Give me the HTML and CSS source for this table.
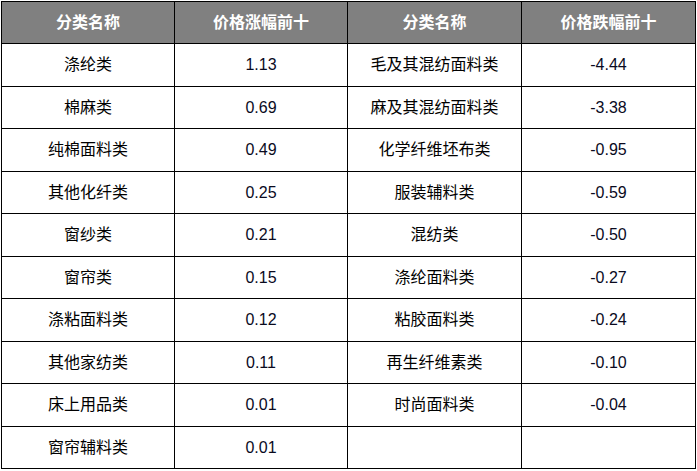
FILE: index.html
```html
<!DOCTYPE html>
<html lang="zh">
<head>
<meta charset="utf-8">
<link rel="stylesheet" href="styles.css">
</head>
<body>
<div class="wrap">
<table class="data">
  <colgroup>
    <col class="c1"><col class="c2"><col class="c3"><col class="c4">
  </colgroup>
  <thead>
    <tr><th>分类名称</th><th>价格涨幅前十</th><th>分类名称</th><th>价格跌幅前十</th></tr>
  </thead>
  <tbody>
    <tr class="r-a"><td>涤纶类</td><td class="num">1.13</td><td>毛及其混纺面料类</td><td class="num">-4.44</td></tr>
    <tr class="r-b"><td>棉麻类</td><td class="num">0.69</td><td>麻及其混纺面料类</td><td class="num">-3.38</td></tr>
    <tr class="r-a"><td>纯棉面料类</td><td class="num">0.49</td><td>化学纤维坯布类</td><td class="num">-0.95</td></tr>
    <tr class="r-b"><td>其他化纤类</td><td class="num">0.25</td><td>服装辅料类</td><td class="num">-0.59</td></tr>
    <tr class="r-a"><td>窗纱类</td><td class="num">0.21</td><td>混纺类</td><td class="num">-0.50</td></tr>
    <tr class="r-b"><td>窗帘类</td><td class="num">0.15</td><td>涤纶面料类</td><td class="num">-0.27</td></tr>
    <tr class="r-a"><td>涤粘面料类</td><td class="num">0.12</td><td>粘胶面料类</td><td class="num">-0.24</td></tr>
    <tr class="r-b"><td>其他家纺类</td><td class="num">0.11</td><td>再生纤维素类</td><td class="num">-0.10</td></tr>
    <tr class="r-a"><td>床上用品类</td><td class="num">0.01</td><td>时尚面料类</td><td class="num">-0.04</td></tr>
    <tr class="r-b"><td>窗帘辅料类</td><td class="num">0.01</td><td></td><td></td></tr>
  </tbody>
</table>
</div>
</body>
</html>
```

FILE: styles.css
```css
html, body {
  margin: 0;
  padding: 0;
  background: #ffffff;
}
.wrap {
  padding: 1px 0 0 1px;
}
.data {
  border-collapse: collapse;
  table-layout: fixed;
  width: 694px;
  font-family: "Liberation Sans", Arial, "Noto Sans CJK SC", sans-serif;
  font-size: 16px;
  color: #000;
}
.c1 { width: 173px; }
.c2 { width: 173px; }
.c3 { width: 174px; }
.c4 { width: 174px; }
.data th,
.data td {
  border: 1px solid #000;
  text-align: center;
  vertical-align: middle;
  padding: 0;
  line-height: 20px;
}
.data th {
  background: #808080;
  color: #ffffff;
  font-weight: bold;
  height: 41px;
}
.data .r-a td { height: 42px; }
.data .r-b td { height: 41px; }
.num {
  color: #0a0a1e;
}
```
